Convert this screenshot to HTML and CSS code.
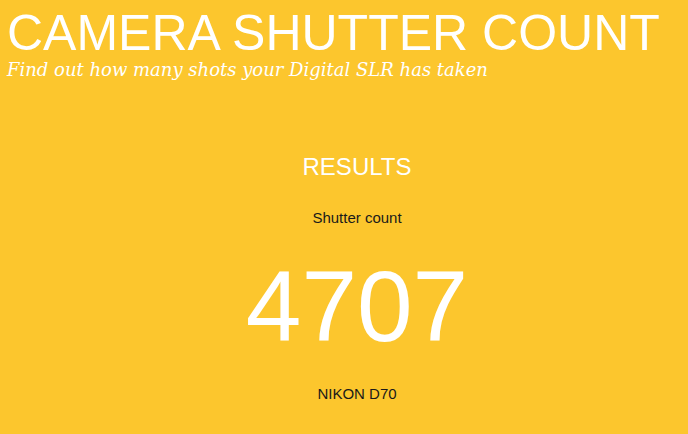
FILE: index.html
```html
<!DOCTYPE html>
<html>
<head>
    <title>Camera Shutter Count</title>
    <link rel="stylesheet" href="styles.css">
</head>
<body>
    <div class="header">
        <h1>CAMERA SHUTTER COUNT</h1>
        <p class="tagline">Find out how many shots your Digital SLR has taken</p>
    </div>

    <div class="results">
        <h2>RESULTS</h2>
        <p class="label">Shutter count</p>
        <p class="count">4707</p>
        <p class="model">NIKON D70</p>
    </div>
</body>
</html>
```
FILE: styles.css
```css
body {
    background-color: #fcc62d;
    font-family: "Liberation Sans", Arial, sans-serif;
    margin: 0;
    padding: 0;
}

.header {
    padding: 0 7px;
}

h1 {
    color: white;
    font-weight: normal;
    font-size: 50px;
    line-height: 1;
    white-space: nowrap;
    margin: 8px 0 0 0;
}

.tagline {
    color: white;
    font-family: "DejaVu Serif", Georgia, serif;
    font-style: italic;
    font-size: 18px;
    line-height: 20px;
    margin: 2px 0 0 0;
}

.results {
    text-align: center;
    padding-left: 26px;
}

.results h2 {
    color: white;
    font-weight: normal;
    font-size: 24px;
    line-height: 1;
    margin: 75px 0 0 0;
}

.label,
.model {
    color: #1a1a1a;
    font-size: 15px;
    line-height: 1;
    margin: 31px 0 0 0;
}

.count {
    color: white;
    font-size: 100px;
    line-height: 1;
    margin: 31px 0 0 0;
}

.model {
    margin-top: 30px;
}
```
